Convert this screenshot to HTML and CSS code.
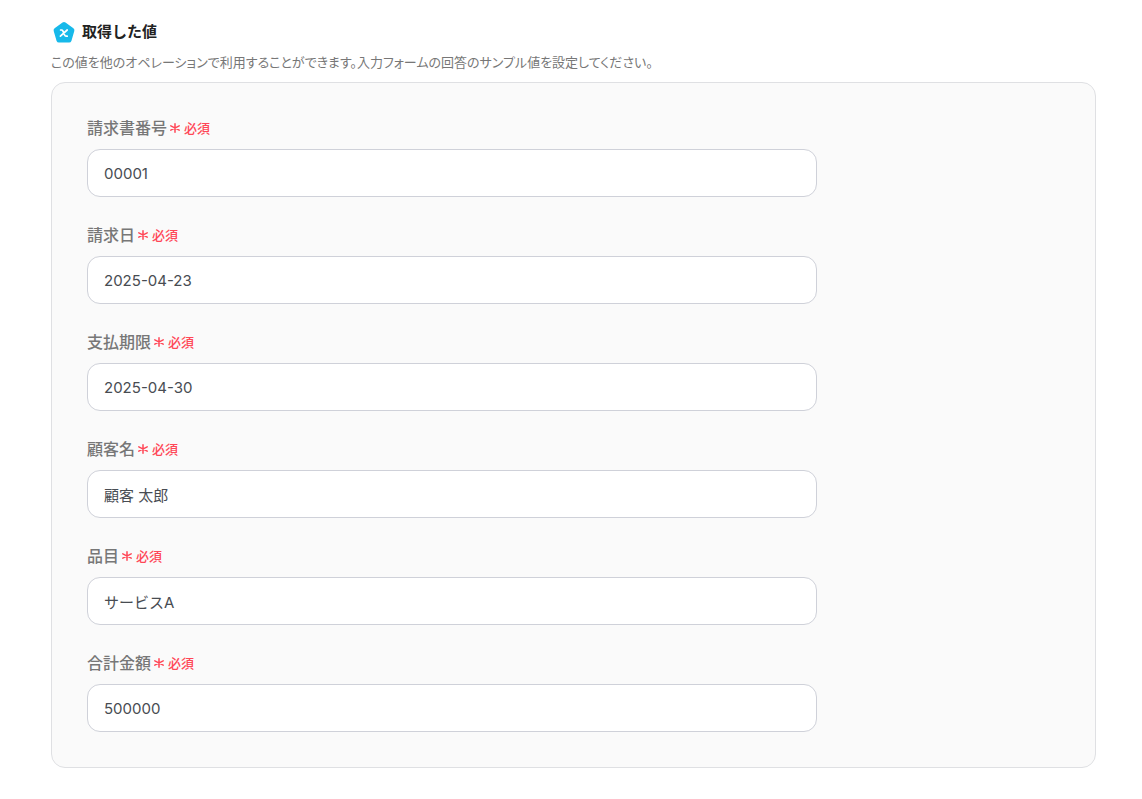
FILE: index.html
```
<!DOCTYPE html>
<html lang="ja">
<head>
<meta charset="UTF-8">
<meta name="viewport" content="width=device-width, initial-scale=1.0">
<title>取得した値</title>
<link rel="stylesheet" href="styles.css">
</head>
<body>
    <main class="page">
        <header class="heading">
            <svg class="heading-icon" viewBox="0 0 24 24" aria-hidden="true">
                <path d="M10.5 2.5Q12 1.5 13.5 2.5L21.4 8.3Q22.8 9.4 22.3 11L19.4 20.9Q18.8 22.5 17.1 22.5H6.9Q5.2 22.5 4.6 20.9L1.7 11Q1.2 9.4 2.6 8.3Z" fill="#17b9ea"/>
                <path d="M8.6 10H9.6Q10.4 10 10.9 11L12.6 15Q13.1 16.2 14 16.2H15.2M15.2 10L8.4 16.2" fill="none" stroke="#fff" stroke-width="1.7" stroke-linecap="round" stroke-linejoin="round"/>
            </svg>
            <h1 class="title">取得した値</h1>
        </header>
        <p class="description">この値を他のオペレーションで利用することができます。入力フォームの回答のサンプル値を設定してください。</p>

        <form class="card">
            <div class="field">
                <label class="label" for="invoiceNumber">請求書番号 <span class="required"><svg class="asterisk" viewBox="0 0 10 10" aria-hidden="true"><path d="M5 .8V9.2M.8 2.8L9.2 7.2M9.2 2.8L.8 7.2"/></svg>必須</span></label>
                <input class="input" type="text" id="invoiceNumber" value="00001">
            </div>
            <div class="field">
                <label class="label" for="invoiceDate">請求日 <span class="required"><svg class="asterisk" viewBox="0 0 10 10" aria-hidden="true"><path d="M5 .8V9.2M.8 2.8L9.2 7.2M9.2 2.8L.8 7.2"/></svg>必須</span></label>
                <input class="input" type="text" id="invoiceDate" value="2025-04-23">
            </div>
            <div class="field">
                <label class="label" for="dueDate">支払期限 <span class="required"><svg class="asterisk" viewBox="0 0 10 10" aria-hidden="true"><path d="M5 .8V9.2M.8 2.8L9.2 7.2M9.2 2.8L.8 7.2"/></svg>必須</span></label>
                <input class="input" type="text" id="dueDate" value="2025-04-30">
            </div>
            <div class="field">
                <label class="label" for="customerName">顧客名 <span class="required"><svg class="asterisk" viewBox="0 0 10 10" aria-hidden="true"><path d="M5 .8V9.2M.8 2.8L9.2 7.2M9.2 2.8L.8 7.2"/></svg>必須</span></label>
                <input class="input" type="text" id="customerName" value="顧客 太郎">
            </div>
            <div class="field">
                <label class="label" for="item">品目 <span class="required"><svg class="asterisk" viewBox="0 0 10 10" aria-hidden="true"><path d="M5 .8V9.2M.8 2.8L9.2 7.2M9.2 2.8L.8 7.2"/></svg>必須</span></label>
                <input class="input" type="text" id="item" value="サービスA">
            </div>
            <div class="field">
                <label class="label" for="total">合計金額 <span class="required"><svg class="asterisk" viewBox="0 0 10 10" aria-hidden="true"><path d="M5 .8V9.2M.8 2.8L9.2 7.2M9.2 2.8L.8 7.2"/></svg>必須</span></label>
                <input class="input" type="text" id="total" value="500000">
            </div>
        </form>
    </main>
</body>
</html>
```
FILE: styles.css
```
* {
    box-sizing: border-box;
}

body {
    margin: 0;
    background-color: #fff;
    font-family: Inter, "Noto Sans CJK JP", sans-serif;
}

.page {
    padding: 20px 46px 31px 51px;
}

.heading {
    display: flex;
    align-items: center;
    gap: 6px;
    padding-left: 1px;
}

.heading-icon {
    width: 24px;
    height: 24px;
}

.title {
    margin: 0;
    font-size: 15px;
    line-height: 22px;
    font-weight: 600;
    color: #222;
}

.description {
    margin: 8px 0 10px;
    font-size: 13px;
    line-height: 20px;
    font-feature-settings: "palt";
    color: #777;
}

.card {
    display: flex;
    flex-direction: column;
    gap: 27px;
    padding: 34px 35px 35px;
    border: 1px solid #dfe0e3;
    border-radius: 14px;
    background-color: #fafafa;
}

.field {
    display: flex;
    flex-direction: column;
    align-items: flex-start;
    gap: 10px;
}

.label {
    display: flex;
    align-items: center;
    gap: 3px;
    font-size: 16px;
    line-height: 22px;
    font-weight: 500;
    color: #777;
}

.required {
    display: flex;
    align-items: center;
    gap: 4px;
    font-size: 13px;
    color: #ff4757;
}

.asterisk {
    width: 10px;
    height: 10px;
    fill: none;
    stroke: currentColor;
    stroke-width: 1.5;
    stroke-linecap: round;
}

.input {
    width: 75%;
    height: 48px;
    padding: 0 16px;
    border: 1px solid #cfd1d9;
    border-radius: 13px;
    background-color: #fff;
    font: inherit;
    font-size: 15px;
    color: #484c52;
}
```
